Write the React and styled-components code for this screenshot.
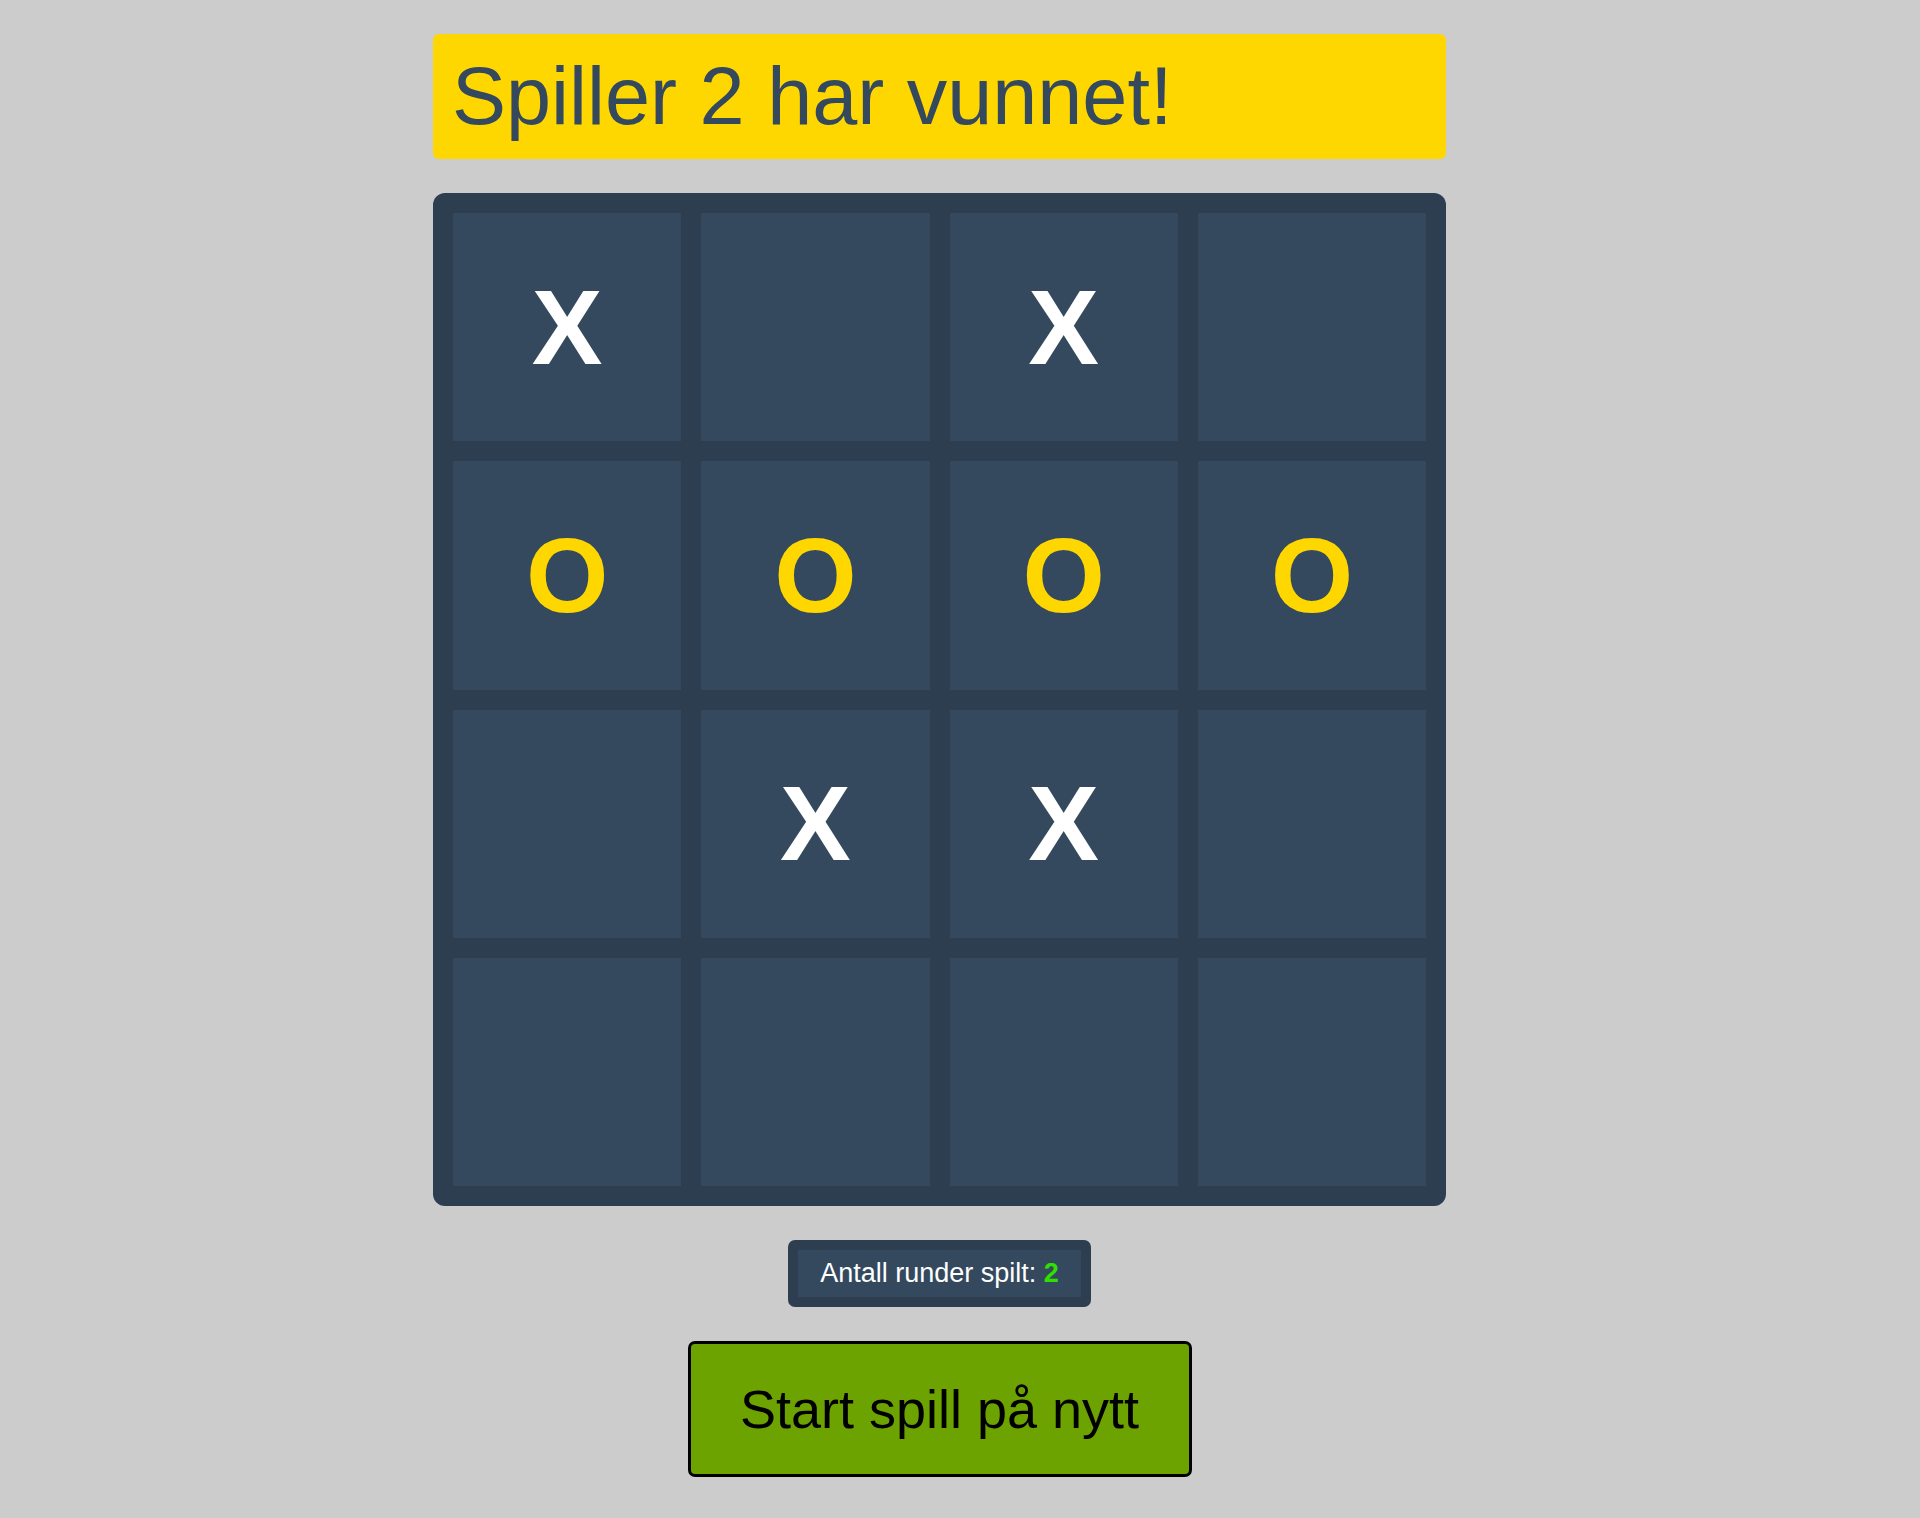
import { createGlobalStyle, styled } from "styled-components";

const GlobalStyle = createGlobalStyle`
  html, body {
    margin: 0;
    padding: 0;
    background: #cccccc;
    font-family: "Liberation Sans", Arial, Helvetica, sans-serif;
  }
`;

const Page = styled.div`
  width: 1879px;
  min-height: 100vh;
  box-sizing: border-box;
  padding-top: 34px;
  display: flex;
  flex-direction: column;
  align-items: center;
  gap: 34px;
`;

const Status = styled.h1`
  width: 1013px;
  height: 125px;
  box-sizing: border-box;
  margin: 0;
  padding: 0 19px;
  background: #ffd700;
  border-radius: 6px;
  color: #34495e;
  font-size: 81px;
  font-weight: 400;
  line-height: 125px;
`;

const Board = styled.div`
  width: 1013px;
  height: 1013px;
  box-sizing: border-box;
  padding: 20px;
  display: grid;
  grid-template-columns: repeat(4, 1fr);
  grid-template-rows: repeat(4, 1fr);
  gap: 20px;
  background: #2c3e50;
  border-radius: 12px;
`;

const Cell = styled.button`
  border: none;
  padding: 0;
  display: flex;
  align-items: center;
  justify-content: center;
  background: #34495e;
  font-family: "Liberation Sans", Arial, sans-serif;
  font-size: 106px;
  font-weight: 700;
  color: ${(p) => (p.$mark === "O" ? "#ffd700" : "#ffffff")};
  cursor: pointer;
`;

const Counter = styled.div`
  padding: 10px;
  background: #2c3e50;
  border-radius: 7px;
`;

const CounterInner = styled.div`
  padding: 8px 22px;
  background: #34495e;
  color: #ffffff;
  font-size: 27px;
  line-height: 31px;
`;

const Count = styled.span`
  color: #2fe000;
  font-weight: 700;
`;

const RestartButton = styled.button`
  width: 504px;
  height: 136px;
  background: #6da300;
  border: 3px solid #000000;
  border-radius: 7px;
  color: #000000;
  font-family: "Liberation Sans", Arial, sans-serif;
  font-size: 54px;
  cursor: pointer;
`;

const cells = [
  "X", "", "X", "",
  "O", "O", "O", "O",
  "", "X", "X", "",
  "", "", "", "",
];

export default function App() {
  return (
    <>
      <GlobalStyle />
      <Page>
        <Status>Spiller 2 har vunnet!</Status>
        <Board>
          {cells.map((mark, i) => (
            <Cell key={i} $mark={mark}>
              {mark}
            </Cell>
          ))}
        </Board>
        <Counter>
          <CounterInner>
            Antall runder spilt: <Count>2</Count>
          </CounterInner>
        </Counter>
        <RestartButton>Start spill på nytt</RestartButton>
      </Page>
    </>
  );
}
